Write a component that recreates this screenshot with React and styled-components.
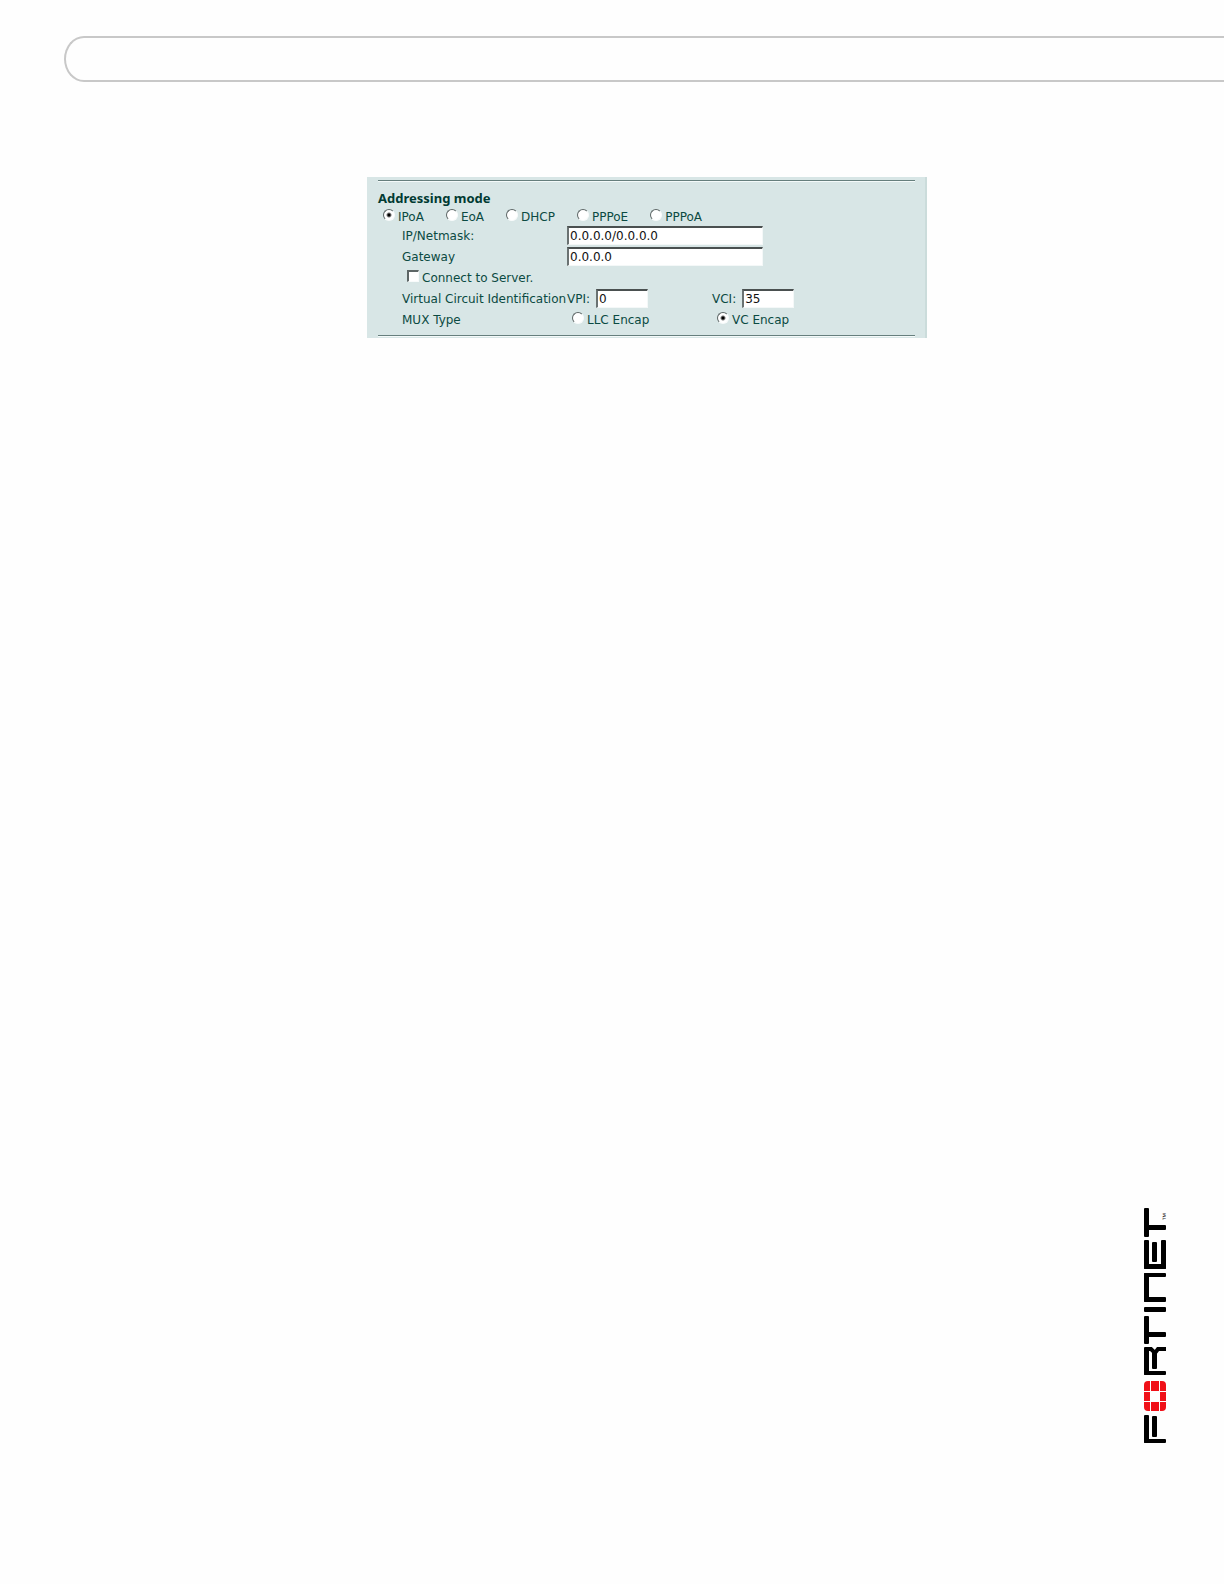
import { useState } from 'react';
import styled, { createGlobalStyle, css } from 'styled-components';

const GlobalStyle = createGlobalStyle`
  * {
    box-sizing: border-box;
  }
  body {
    margin: 0;
    background: #fefefe;
  }
`;

const Page = styled.div`
  min-height: 100vh;
  display: flex;
  flex-direction: column;
  padding: 36px 0 140px 64px;
`;

const HeaderTab = styled.header`
  height: 46px;
  border: 2px solid #c8c8c8;
  border-right: none;
  border-radius: 20px 0 0 20px / 23px 0 0 23px;
`;

const Main = styled.main`
  flex: 1;
  padding: 95px 297px 0 303px;
`;

const Panel = styled.form`
  padding: 3px 10px 1px 11px;
  background: #d8e6e6;
  border-right: 2px solid #cbdcdb;
  color: #0b4a42;
  font-family: 'DejaVu Sans', Verdana, sans-serif;
  font-size: 12px;
  line-height: 16px;
`;

const Divider = styled.hr`
  margin: 0;
  border: none;
  border-top: 1px solid #667f7d;
  border-bottom: 1px solid #f4fafa;
`;

const Heading = styled.h1`
  margin: 8px 0 2px;
  color: #003a32;
  font-family: 'Noto Sans', Verdana, sans-serif;
  font-size: 13px;
  line-height: 16px;
`;

const ModeList = styled.div`
  display: flex;
  gap: 22px;
  padding-left: 5px;
`;

const FieldGrid = styled.div`
  display: grid;
  grid-template-columns: 165px 145px 1fr;
  grid-auto-rows: 21px;
  align-items: center;
  padding: 0 0 5px 24px;
`;

const Label = styled.label`
  white-space: nowrap;
`;

const GroupLabel = styled.span`
  white-space: nowrap;
`;

const Cell = styled.div`
  display: flex;
  align-items: center;
  gap: 6px;
  padding-left: ${({ $indent }) => ($indent ? '5px' : '0')};
  ${({ $wide }) =>
    $wide &&
    css`
      grid-column: span 2;
    `}
  ${({ $row }) =>
    $row &&
    css`
      grid-column: 1 / -1;
    `}
`;

const TextInput = styled.input`
  width: ${({ $short }) => ($short ? '52px' : '196px')};
  height: 19px;
  padding: 0 1px;
  border: solid;
  border-width: 2px 1px 1px 2px;
  border-color: #4a5050 #f4f8f8 #f4f8f8 #6a7272;
  background: #fff;
  color: #111;
  font: inherit;
`;

const ChoiceLabel = styled.label`
  display: flex;
  gap: 3px;
  padding-top: 1px;
  white-space: nowrap;
`;

const Choice = styled.input`
  appearance: none;
  width: 12px;
  height: 12px;
  margin: 0;
  border: 1px solid;
  border-color: #5d6666 #f8fbfb #f8fbfb #5d6666;
  border-radius: ${({ type }) => (type === 'radio' ? '50%' : '0')};
  background: #fff;

  &[type='checkbox'] {
    border-width: 2px 1px 1px 2px;
  }

  &:checked {
    background: radial-gradient(circle, #000 1px, #fff 3px);
  }
`;

const Footer = styled.footer`
  display: flex;
  justify-content: flex-end;
  padding-right: 54px;
`;

const TradeMark = styled.text`
  fill: #333;
  font-family: 'Liberation Sans', Arial, sans-serif;
  font-size: 8px;
`;

const modes = ['IPoA', 'EoA', 'DHCP', 'PPPoE', 'PPPoA'];

// x, y, width, height of the black bars, from the top down
const logoBars = [
  // T
  [2, 2, 5, 29],
  [2, 19, 22, 5],
  // E
  [2, 34, 5, 29],
  [2, 58, 22, 5],
  [19, 34, 5, 29],
  [10, 36, 5, 20],
  // N
  [2, 67, 22, 4],
  [2, 67, 5, 29],
  [2, 91, 22, 5],
  // I
  [2, 101, 22, 5],
  // T
  [2, 110, 5, 28],
  [2, 126, 22, 5],
  // R
  [2, 141, 5, 28],
  [2, 165, 22, 4],
  [10, 146, 5, 17],
  // F
  [2, 209, 5, 28],
  [2, 233, 22, 4],
  [10, 210, 5, 21],
];

const logoTiles = [
  [9, 175, 8, 10],
  [2, 186, 6, 9],
  [18, 186, 6, 9],
  [9, 196, 8, 9],
];

const Logo = () => (
  <svg width="28" height="238" viewBox="0 0 28 238" role="img" aria-label="Fortinet">
    {logoBars.map(([x, y, width, height]) => (
      <rect
        key={`${x}-${y}-${width}`}
        x={x}
        y={y}
        width={width}
        height={height}
        rx="1"
      />
    ))}
    <polyline
      points="4,143 9,143 13,147 16,143 24,143"
      fill="none"
      stroke="#000"
      strokeWidth="4"
    />
    <g fill="#f01018">
      {logoTiles.map(([x, y, width, height]) => (
        <rect key={`${x}-${y}`} x={x} y={y} width={width} height={height} />
      ))}
      <path d="M8 175v10H2v-6q0-4 4-4z" />
      <path d="M18 175v10h6v-6q0-4-4-4z" />
      <path d="M8 205v-9H2v5q0 4 4 4z" />
      <path d="M18 205v-9h6v5q0 4-4 4z" />
    </g>
    <TradeMark transform="translate(26 15) rotate(-90)">™</TradeMark>
  </svg>
);

const App = () => {
  const [mode, setMode] = useState('IPoA');
  const [netmask, setNetmask] = useState('0.0.0.0/0.0.0.0');
  const [gateway, setGateway] = useState('0.0.0.0');
  const [connect, setConnect] = useState(false);
  const [vpi, setVpi] = useState('0');
  const [vci, setVci] = useState('35');
  const [mux, setMux] = useState('VC');

  return (
    <>
      <GlobalStyle />
      <Page>
        <HeaderTab />
        <Main>
          <Panel>
            <Divider />
            <Heading>Addressing mode</Heading>
            <ModeList>
              {modes.map(name => (
                <ChoiceLabel key={name}>
                  <Choice
                    type="radio"
                    name="mode"
                    checked={mode === name}
                    onChange={() => setMode(name)}
                  />
                  {name}
                </ChoiceLabel>
              ))}
            </ModeList>
            <FieldGrid>
              <Label htmlFor="netmask">IP/Netmask:</Label>
              <Cell $wide>
                <TextInput
                  id="netmask"
                  value={netmask}
                  onChange={e => setNetmask(e.target.value)}
                />
              </Cell>
              <Label htmlFor="gateway">Gateway</Label>
              <Cell $wide>
                <TextInput
                  id="gateway"
                  value={gateway}
                  onChange={e => setGateway(e.target.value)}
                />
              </Cell>
              <Cell $row $indent>
                <ChoiceLabel>
                  <Choice
                    type="checkbox"
                    checked={connect}
                    onChange={e => setConnect(e.target.checked)}
                  />
                  Connect to Server.
                </ChoiceLabel>
              </Cell>
              <GroupLabel>Virtual Circuit Identification</GroupLabel>
              <Cell>
                <Label htmlFor="vpi">VPI:</Label>
                <TextInput
                  id="vpi"
                  $short
                  value={vpi}
                  onChange={e => setVpi(e.target.value)}
                />
              </Cell>
              <Cell>
                <Label htmlFor="vci">VCI:</Label>
                <TextInput
                  id="vci"
                  $short
                  value={vci}
                  onChange={e => setVci(e.target.value)}
                />
              </Cell>
              <GroupLabel>MUX Type</GroupLabel>
              {['LLC', 'VC'].map(name => (
                <Cell key={name} $indent>
                  <ChoiceLabel>
                    <Choice
                      type="radio"
                      name="mux"
                      checked={mux === name}
                      onChange={() => setMux(name)}
                    />
                    {name} Encap
                  </ChoiceLabel>
                </Cell>
              ))}
            </FieldGrid>
            <Divider />
          </Panel>
        </Main>
        <Footer>
          <Logo />
        </Footer>
      </Page>
    </>
  );
};

export default App;
